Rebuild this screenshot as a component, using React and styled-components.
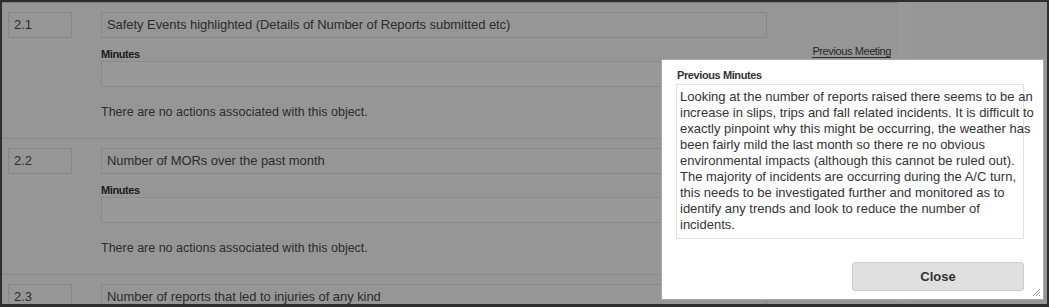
import React from 'react';
import styled, { createGlobalStyle } from 'styled-components';

const GlobalStyle = createGlobalStyle`
  html, body { margin: 0; padding: 0; background: #2e2e2e; }
  body { font-family: "Liberation Sans", Arial, sans-serif; }
  #root { width: 1049px; height: 307px; }
`;

const Frame = styled.div`
  position: relative;
  box-sizing: border-box;
  width: 1049px;
  height: 307px;
  border: 2px solid #2e2e2e;
  border-bottom-width: 3px;
  overflow: hidden;
  background: #fbfbfb;
`;

const Page = styled.div`
  display: flex;
  height: 100%;
`;

const Main = styled.main`
  flex: none;
  width: 896px;
  border-top: 1px solid #d2d2d2;
`;

const Gutter = styled.div`
  flex: none;
  width: 13px;
  background: #ffffff;
`;

const Aside = styled.aside`
  flex: 1;
`;

const Item = styled.section`
  display: grid;
  grid-template-columns: 64px 1fr;
  column-gap: 29px;
  padding: 9px 7px 18px 6px;
  border-bottom: 1px solid #e6e6e6;
`;

const NumberBox = styled.div`
  align-self: start;
  box-sizing: border-box;
  height: 26px;
  padding: 0 5px;
  border: 1px solid #e2e2e2;
  font-size: 13px;
  line-height: 24px;
  color: #4a4a4a;
`;

const Body = styled.div`
  display: flex;
  flex-direction: column;
`;

const TitleBox = styled.div`
  box-sizing: border-box;
  width: 666px;
  height: 26px;
  padding: 0 5px;
  border: 1px solid #e2e2e2;
  font-size: 13px;
  letter-spacing: -0.06px;
  line-height: 24px;
  color: #4a4a4a;
  white-space: nowrap;
`;

const FieldHeader = styled.div`
  display: flex;
  justify-content: space-between;
  align-items: flex-end;
  height: 17px;
  margin-top: 6px;
`;

const FieldLabel = styled.span`
  font-size: 11px;
  letter-spacing: -0.4px;
  font-weight: bold;
  line-height: 14px;
  color: #333;
`;

const HeaderLink = styled.a`
  margin-bottom: 3px;
  font-size: 11px;
  letter-spacing: -0.4px;
  line-height: 11px;
  color: #444;
  text-decoration: none;
  border-bottom: 1px solid #444;
`;

const MinutesInput = styled.div`
  box-sizing: border-box;
  height: 26px;
  border: 1px solid #e4e4e4;
  background: #fff;
`;

const Note = styled.p`
  margin: 18px 0 0;
  font-size: 12.5px;
  line-height: 15px;
  color: #4a4a4a;
`;

const Overlay = styled.div`
  position: absolute;
  inset: 0;
  background: rgba(0, 0, 0, 0.4);
`;

const Dialog = styled.div`
  position: absolute;
  left: 659px;
  top: 57px;
  box-sizing: border-box;
  width: 383px;
  height: 241px;
  padding: 8px 19px 0 14px;
  display: flex;
  flex-direction: column;
  background: #fff;
  border: 1px solid #a8a8a8;
  color: #333;
`;

const DialogLabel = styled.div`
  padding-left: 1px;
  font-size: 11px;
  letter-spacing: -0.4px;
  font-weight: bold;
  line-height: 15px;
  color: #333;
`;

const ReadOnlyText = styled.div`
  box-sizing: border-box;
  height: 155px;
  margin-top: 1px;
  padding: 4px 3px 5px;
  border: 1px solid #e3e3e3;
  font-size: 13px;
  line-height: 16px;
  color: #333;
`;

const TextLine = styled.span`
  display: block;
  white-space: nowrap;
`;

const CloseButton = styled.button`
  align-self: flex-end;
  box-sizing: border-box;
  width: 172px;
  height: 29px;
  margin-top: 23px;
  border: 1px solid #cdcdcd;
  border-radius: 3px;
  background: #e0e0e0;
  font-family: "Liberation Sans", Arial, sans-serif;
  font-size: 13px;
  font-weight: bold;
  color: #333;
  cursor: pointer;
`;

const Grip = styled.svg`
  position: absolute;
  right: 2px;
  bottom: 2px;
`;

const items = [
  { no: '2.1', title: 'Safety Events highlighted (Details of Number of Reports submitted etc)', link: true },
  { no: '2.2', title: 'Number of MORs over the past month' },
  { no: '2.3', title: 'Number of reports that led to injuries of any kind' },
];

const minutes = [
  'Looking at the number of reports raised there seems to be an',
  'increase in slips, trips and fall related incidents. It is difficult to',
  'exactly pinpoint why this might be occurring, the weather has',
  'been fairly mild the last month so there re no obvious',
  'environmental impacts (although this cannot be ruled out).',
  'The majority of incidents are occurring during the A/C turn,',
  'this needs to be investigated further and monitored as to',
  'identify any trends and look to reduce the number of',
  'incidents.',
];

export default function App() {
  return (
    <>
      <GlobalStyle />
      <Frame>
        <Page>
          <Main>
            {items.map((it) => (
              <Item key={it.no}>
                <NumberBox>{it.no}</NumberBox>
                <Body>
                  <TitleBox>{it.title}</TitleBox>
                  <FieldHeader>
                    <FieldLabel>Minutes</FieldLabel>
                    {it.link && <HeaderLink>Previous Meeting</HeaderLink>}
                  </FieldHeader>
                  <MinutesInput />
                  <Note>There are no actions associated with this object.</Note>
                </Body>
              </Item>
            ))}
          </Main>
          <Gutter />
          <Aside />
        </Page>
        <Overlay />
        <Dialog>
          <DialogLabel>Previous Minutes</DialogLabel>
          <ReadOnlyText>
            {minutes.map((l, i) => (
              <TextLine key={i}>{l}</TextLine>
            ))}
          </ReadOnlyText>
          <CloseButton>Close</CloseButton>
          <Grip width="9" height="9" viewBox="0 0 9 9">
            <path d="M8 1 L1 8 M8 4 L4 8 M8 7 L7 8" stroke="#999" strokeWidth="1" />
          </Grip>
        </Dialog>
      </Frame>
    </>
  );
}
